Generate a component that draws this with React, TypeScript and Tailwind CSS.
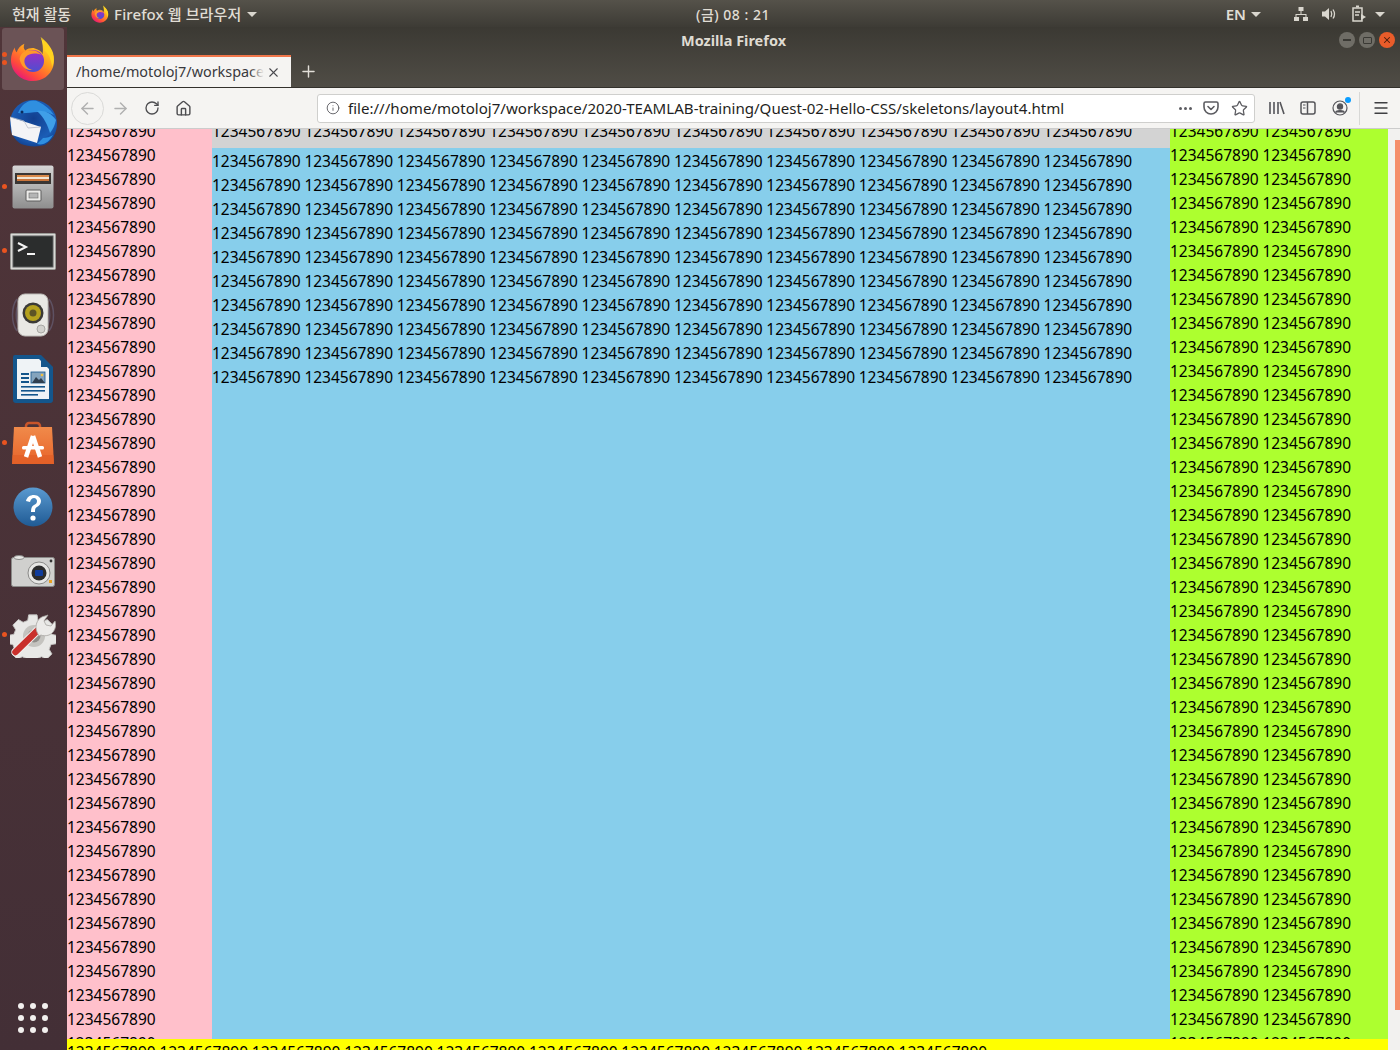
import { ArrowLeft, ArrowRight, Home, Info, Menu, Plus, RotateCw, Star, X } from 'lucide-react';
import type { ReactNode } from 'react';

const repeatNumber = (count: number) => Array(count).fill('1234567890').join(' ');

const FirefoxLogo = ({ size = 48, id = 'fx' }: { size?: number; id?: string }) => (
  <svg width={size} height={size} viewBox="0 0 48 48">
    <defs>
      <linearGradient id={`${id}-body`} x1="0.8" y1="0.1" x2="0.2" y2="0.95">
        <stop offset="0" stopColor="#ffe226" />
        <stop offset="0.4" stopColor="#ff9a1f" />
        <stop offset="0.75" stopColor="#ff4c3a" />
        <stop offset="1" stopColor="#e6167c" />
      </linearGradient>
      <linearGradient id={`${id}-globe`} x1="0.5" y1="0" x2="0.5" y2="1">
        <stop offset="0" stopColor="#a32bc4" />
        <stop offset="1" stopColor="#4d4fd0" />
      </linearGradient>
    </defs>
    <path d="M32 1c2 4 6 7 9 11 5 6 6 14 4 20-3 9-11 15-21 15C11 47 1 37 1 25c0-5 2-10 4-13 0 2 1 4 2 5 1-4 4-7 8-9-1 3-1 5 1 7 3-2 7-3 10-2 4 1 7 3 8 6 1-6 0-12-2-18z" fill={`url(#${id}-body)`} />
    <path d="M32 1c5 4 11 10 13 17 1 5 1 10-1 14-1-7-3-13-8-17 1-5-1-10-4-14z" fill="#ffd21f" />
    <circle cx="24" cy="26" r="11.5" fill={`url(#${id}-globe)`} />
    <path d="M10 24c1-6 5-9 10-9 5-1 10 1 13 5-4-2-9-2-12-1-4 1-6 4-6 7 0 5 4 9 9 9-6 2-12-2-14-11z" fill="#ff9a2a" />
  </svg>
);

const Thunderbird = () => (
  <svg width="48" height="50" viewBox="0 0 48 50">
    <defs>
      <radialGradient id="tb-body" cx="0.5" cy="0.4" r="0.65">
        <stop offset="0" stopColor="#123f8e" />
        <stop offset="0.7" stopColor="#1b5db6" />
        <stop offset="1" stopColor="#0f3d8a" />
      </radialGradient>
    </defs>
    <path d="M1 26C1 12 11 2 24 2s24 10 24 24c0 9-5 17-12 21-8 2-16 2-24-1C5 42 1 34 1 26z" fill="url(#tb-body)" />
    <path d="M9 15C13 5 22 0 30 4c6 3 11 7 15 13-6-3-11-4-16-3-7 0-13 2-20 1z" fill="#2f8fe0" />
    <path d="M28 13c7-1 14 2 19 9-1 5-3 9-6 13-2-7-6-16-13-22z" fill="#3f9fe8" />
    <circle cx="13" cy="14" r="1.5" fill="#0c2a5c" />
    <path d="M1 19l31 10-4 16-25-8z" fill="#f4f4f6" />
    <path d="M1 19l14 4 4 7 13-1" fill="none" stroke="#b8bcc8" strokeWidth="0.8" />
    <path d="M28 46c7 2 13-3 16-9-3 2-6 3-10 3z" fill="#2f8fe0" />
  </svg>
);

const FileCabinet = () => (
  <svg width="42" height="44" viewBox="0 0 42 44">
    <defs>
      <linearGradient id="fc-body" x1="0" y1="0" x2="0" y2="1">
        <stop offset="0" stopColor="#d6d6d6" />
        <stop offset="1" stopColor="#8e8e8e" />
      </linearGradient>
    </defs>
    <rect x="0.5" y="0.5" width="41" height="43" rx="2" fill="url(#fc-body)" />
    <rect x="3" y="8" width="36" height="11" fill="#3a3634" />
    <rect x="5" y="10" width="32" height="2" fill="#d98a4a" />
    <rect x="5" y="12" width="32" height="2" fill="#f0e4d2" />
    <rect x="5" y="14" width="32" height="2" fill="#c9743a" />
    <rect x="14" y="25" width="15" height="11" rx="1" fill="#ecebe9" stroke="#5c5c5c" />
    <rect x="17" y="28" width="9" height="5" fill="#b5b5b5" stroke="#6b6b6b" strokeWidth="0.6" />
  </svg>
);

const Terminal = () => (
  <svg width="46" height="37" viewBox="0 0 46 37">
    <rect x="0.5" y="0.5" width="45" height="36" rx="1" fill="#d9d9d6" stroke="#9a9a96" />
    <rect x="3" y="3" width="40" height="31" fill="#2b2d2d" stroke="#5a5c5c" />
    <path d="M8 10l8 4-8 4" stroke="#f4f4f4" strokeWidth="2" fill="none" />
    <rect x="17" y="20" width="8" height="2" fill="#f4f4f4" />
  </svg>
);

const Speaker = () => (
  <svg width="50" height="44" viewBox="0 0 50 44">
    <g fill="none" stroke="#6e6a85" strokeOpacity="0.55" strokeWidth="1.5">
      <path d="M9 6C3 14 3 30 9 38" />
      <path d="M41 6c6 8 6 24 0 32" />
      <path d="M12 9C7 16 7 28 12 35" />
      <path d="M38 9c5 7 5 19 0 26" />
    </g>
    <rect x="10" y="1" width="30" height="42" rx="7" fill="#e9e8e4" stroke="#bdbcb8" />
    <circle cx="25" cy="20" r="10.5" fill="#3b3a37" />
    <circle cx="25" cy="20" r="8" fill="#b5a11e" />
    <circle cx="25" cy="20" r="3.5" fill="#5d5426" />
    <circle cx="33" cy="36" r="4" fill="#d2d1cd" stroke="#a9a8a4" />
  </svg>
);

const WriterDoc = () => (
  <svg width="40" height="48" viewBox="0 0 40 48">
    <path d="M2 0h26l12 12v33a3 3 0 0 1-3 3H3a3 3 0 0 1-3-3V2a2 2 0 0 1 2-2z" fill="#14568c" />
    <path d="M4 4h22l10 10v30H4z" fill="#eff3f6" />
    <path d="M28 1l11 11H28z" fill="#14568c" />
    <g fill="#14568c">
      <rect x="8" y="18" width="8" height="2" />
      <rect x="8" y="22" width="8" height="2" />
      <rect x="8" y="26" width="8" height="2" />
      <rect x="8" y="31" width="24" height="1.6" />
      <rect x="8" y="35" width="24" height="1.6" />
      <rect x="8" y="39" width="17" height="1.6" />
    </g>
    <rect x="18" y="17" width="14" height="11" fill="#84a4bd" stroke="#14568c" strokeWidth="0.8" />
    <path d="M19 28l4-6 3 3 2-2 4 5z" fill="#2f3f4f" />
    <circle cx="29" cy="20" r="1.3" fill="#f0c040" />
  </svg>
);

const ShopBag = () => (
  <svg width="42" height="44" viewBox="0 0 42 44">
    <defs>
      <linearGradient id="bag" x1="0" y1="0" x2="0" y2="1">
        <stop offset="0" stopColor="#f08a4a" />
        <stop offset="1" stopColor="#e8642a" />
      </linearGradient>
    </defs>
    <path d="M14 10V5a3 3 0 0 1 3-3h8a3 3 0 0 1 3 3v5" fill="none" stroke="#c9552a" strokeWidth="2.5" />
    <path d="M2 6h38l2 37H0z" fill="url(#bag)" />
    <path d="M0.5 34h41l0.5 9H0z" fill="#e05e26" opacity="0.6" />
    <path d="M21 15l-7 21M21 15l7 21" stroke="#fff" strokeWidth="4.5" fill="none" />
    <rect x="10" y="25" width="22" height="3.5" rx="1.5" fill="#fff" />
  </svg>
);

const HelpIcon = () => (
  <svg width="40" height="40" viewBox="0 0 40 40">
    <defs>
      <linearGradient id="help" x1="0" y1="0" x2="0" y2="1">
        <stop offset="0" stopColor="#5a9ad0" />
        <stop offset="1" stopColor="#1f5a94" />
      </linearGradient>
    </defs>
    <circle cx="20" cy="20" r="19.5" fill="url(#help)" />
    <path d="M13 14c1-4 4-6 8-6 4 0 7 3 7 6 0 3-2 5-4 6-2 1-2 3-2 5h-4c0-4 1-6 3-7s3-2 3-4c0-1-1-3-3-3-2 0-3 1-4 4z" fill="#fff" />
    <circle cx="20" cy="31" r="2.6" fill="#fff" />
  </svg>
);

const Camera = () => (
  <svg width="44" height="32" viewBox="0 0 44 32">
    <rect x="0.5" y="2.5" width="43" height="29" rx="2" fill="#d0d0ce" stroke="#8a8a88" />
    <ellipse cx="8" cy="2.5" rx="5" ry="2" fill="#e8e8e6" stroke="#8a8a88" />
    <circle cx="28" cy="18" r="11" fill="#e6e6e4" stroke="#8a8a88" />
    <circle cx="28" cy="18" r="7.5" fill="#2c2c2c" />
    <rect x="24" y="15" width="8" height="6" rx="1" fill="#0f3c9c" />
    <rect x="38" y="25" width="3" height="3" fill="#eaa020" />
    <circle cx="40" cy="6" r="1.4" fill="#333" />
  </svg>
);

const SettingsTool = () => (
  <svg width="46" height="46" viewBox="0 0 46 46">
    <path d="M19 2h9l1 6 5 2 5-3 6 6-3 5 2 5 5 1v9l-6 1-2 5 3 5-6 6-5-3-5 2-1 6h-9l-1-6-5-2-5 3-6-6 3-5-2-5-5-1v-9l6-1 2-5-3-5 6-6 5 3 5-2z" transform="translate(1 1) scale(0.93)" fill="#e8e8e6" stroke="#c4c4c2" />
    <circle cx="24" cy="24" r="11" fill="#c4c3bf" />
    <circle cx="24" cy="24" r="6.5" fill="#8f8d89" />
    <path d="M5.5 40L29 17" stroke="#f0efed" strokeWidth="8.5" strokeLinecap="round" />
    <path d="M5.500 40L29 17" stroke="#c9302c" strokeWidth="6.5" strokeLinecap="round" />
    <path d="M27 20c-3-7 1-15 8-16l3-1-4 6 2 4 5 1 4-5c2 6-1 12-6 14-3 1-6 1-8 0l-2 1z" fill="#ecebe9" stroke="#a8a6a2" strokeWidth="0.8" />
  </svg>
);

const Pocket = () => (
  <svg width="16" height="16" viewBox="0 0 16 16" fill="none" stroke="#5c5c61" strokeWidth="1.6">
    <path d="M2.5 2h11A1.5 1.5 0 0 1 15 3.5V7a7 7 0 0 1-14 0V3.5A1.5 1.5 0 0 1 2.5 2z" />
    <path d="M5 6.5l3 3 3-3" strokeLinecap="round" strokeLinejoin="round" />
  </svg>
);

const Library = () => (
  <svg width="17" height="16" viewBox="0 0 17 16" stroke="#55555a" strokeWidth="1.6" fill="none">
    <path d="M2 2v12M6 2v12M10 2v12M12 2l4 12" />
  </svg>
);

const Sidebar = () => (
  <svg width="16" height="16" viewBox="0 0 16 16" fill="none" stroke="#55555a" strokeWidth="1.5">
    <rect x="1" y="2" width="14" height="12" rx="2" />
    <path d="M7.5 2v12" />
    <path d="M3 5h2.5M3 8h2.5" strokeWidth="1.2" />
  </svg>
);

const Account = () => (
  <span className="relative block">
    <svg width="16" height="16" viewBox="0 0 16 16" fill="none" stroke="#55555a" strokeWidth="1.2">
      <circle cx="8" cy="8" r="7" />
      <circle cx="8" cy="6.5" r="2.6" fill="#55555a" />
      <path d="M3.5 12.5c1-2.5 8-2.5 9 0" fill="#55555a" />
    </svg>
    <span className="absolute -top-[3px] -right-[3px] h-[6px] w-[6px] rounded-full bg-[#0a9dff]" />
  </span>
);

const Caret = () => <span className="block h-0 w-0 border-x-[5px] border-t-[5px] border-x-transparent border-t-[#d9d6ce]" />;

const Dots = ({ rows }: { rows: number[] }) => (
  <>
    {rows.map((top) => (
      <span key={top} className="absolute left-[2px] h-[5px] w-[5px] rounded-full bg-[#e95420]" style={{ top }} />
    ))}
  </>
);

const DockItem = ({ children, dots = [], active }: { children: ReactNode; dots?: number[]; active?: boolean }) => (
  <div className="relative flex h-[64px] w-[67px] items-center justify-center">
    {active && <div className="absolute left-[2px] top-[1px] h-[62px] w-[62px] rounded-[3px] bg-[#6b5356]" />}
    <Dots rows={dots} />
    <div className="relative -translate-x-px">{children}</div>
  </div>
);

const Dock = () => (
  <aside className="flex w-[67px] flex-col bg-gradient-to-b from-[#503539] to-[#432f36]">
    <DockItem active dots={[25, 33]}><FirefoxLogo size={46} id="dock-fx" /></DockItem>
    <DockItem><Thunderbird /></DockItem>
    <DockItem dots={[29]}><FileCabinet /></DockItem>
    <DockItem dots={[29]}><Terminal /></DockItem>
    <DockItem><Speaker /></DockItem>
    <DockItem><WriterDoc /></DockItem>
    <DockItem dots={[29]}><ShopBag /></DockItem>
    <DockItem><HelpIcon /></DockItem>
    <DockItem><Camera /></DockItem>
    <DockItem dots={[29]}><SettingsTool /></DockItem>
    <div className="mt-auto mb-[17px] -ml-px grid w-[30px] grid-cols-3 gap-[6px] self-center">
      {Array.from({ length: 9 }).map((_, i) => (
        <span key={i} className="h-[6px] w-[6px] rounded-full bg-[#f2f0ee]" />
      ))}
    </div>
  </aside>
);

const TopBar = () => (
  <header className="flex h-[27px] items-center bg-gradient-to-b from-[#55524a] to-[#3d3b35] pt-[1px] text-[15px] font-medium text-[#e0ddd5] [font-family:'Noto_Sans','Noto_Sans_CJK_KR',sans-serif]">
    <div className="flex w-[583px] items-center">
      <span className="ml-[12px]">현재 활동</span>
      <span className="ml-[20px] block"><FirefoxLogo size={18} id="top-fx" /></span>
      <span className="ml-[5px] tracking-[0.1px]">Firefox 웹 브라우저</span>
      <span className="ml-[6px] block"><Caret /></span>
    </div>
    <span className="w-[300px] text-center text-[14px] tracking-[0.5px]">(금) 08 : 21</span>
    <div className="flex flex-1 items-center">
      <span className="ml-auto flex items-center gap-[5px] font-semibold">EN <Caret /></span>
      <svg className="ml-[32px]" width="16" height="16" viewBox="0 0 16 16" fill="#d9d6ce">
        <rect x="5.5" y="1" width="5" height="4" />
        <rect x="1" y="11" width="5" height="4" />
        <rect x="10" y="11" width="5" height="4" />
        <path d="M7.5 5h1v3h5v3h-1V9h-9v2h-1V8h5z" />
      </svg>
      <svg className="ml-[12px]" width="16" height="16" viewBox="0 0 16 16" fill="#d9d6ce">
        <path d="M1 5.5h3L8 2v12l-4-3.5H1z" />
        <path d="M10 5c1 2 1 4 0 6M12 3.5c2 3 2 6 0 9" stroke="#d9d6ce" strokeWidth="1.3" fill="none" />
      </svg>
      <svg className="ml-[14px]" width="16" height="18" viewBox="0 0 16 18" fill="none" stroke="#d9d6ce" strokeWidth="1.5">
        <path d="M2 3h9v13H2z" />
        <path d="M5 1.5h3" strokeWidth="2" />
        <path d="M4 7h5M4 10h4" />
        <path d="M10 9l5 3-5 3z" fill="#d9d6ce" stroke="none" />
      </svg>
      <span className="mr-[15px] ml-[8px] block"><Caret /></span>
    </div>
  </header>
);

const TitleBar = () => (
  <div className="relative flex h-[28px] items-center justify-center text-[14.5px] font-bold text-[#dfdbd2] [font-family:'Noto_Sans',sans-serif]">
    Mozilla Firefox
    <div className="absolute top-[5px] right-[5px] flex gap-[4px]">
      <span className="flex h-[16px] w-[16px] items-center justify-center rounded-full bg-[#6f6d66]">
        <span className="h-[1.5px] w-[8px] bg-[#3a3934]" />
      </span>
      <span className="flex h-[16px] w-[16px] items-center justify-center rounded-full bg-[#6f6d66]">
        <span className="h-[7px] w-[9px] rounded-[1px] border border-[#3a3934]" />
      </span>
      <span className="flex h-[16px] w-[16px] items-center justify-center rounded-full bg-[#e95c2a]">
        <X size={10} strokeWidth={2.5} color="#4a1d0c" />
      </span>
    </div>
  </div>
);

const TabStrip = () => (
  <div className="flex h-[33px] items-stretch border-b border-[#33312c]">
    <div className="relative flex w-[224px] items-center border-t-2 border-[#f0764a] bg-[#f5f4f2] pl-[9px] text-[14.4px] text-[#39393d] [font-family:'Noto_Sans',sans-serif]">
      <span className="w-[188px] overflow-hidden whitespace-nowrap">/home/motoloj7/workspace/2020-TEAMLAB</span>
      <span className="absolute right-[27px] h-full w-[14px] bg-gradient-to-r from-transparent to-[#f5f4f2]" />
      <X className="absolute right-[10px]" size={15} strokeWidth={1.7} color="#4a4a4f" />
    </div>
    <div className="flex w-[34px] items-center justify-center">
      <Plus size={19} strokeWidth={1.8} color="#e2dfd8" />
    </div>
  </div>
);

const Toolbar = () => (
  <div className="flex h-[41px] items-center border-b border-[#cccccc] bg-[#f5f4f2]">
    <div className="ml-[4px] flex h-[33px] w-[33px] items-center justify-center rounded-full border border-[#dadad8]">
      <ArrowLeft size={19} strokeWidth={1.8} color="#b0b0b0" />
    </div>
    <ArrowRight className="ml-[7px]" size={19} strokeWidth={1.8} color="#b0b0b0" />
    <RotateCw className="ml-[14px]" size={16} strokeWidth={2} color="#4d4d50" />
    <Home className="ml-[15px]" size={17} strokeWidth={2} color="#4d4d50" />
    <div className="ml-[125px] flex h-[29px] w-[938px] items-center rounded-[3px] border border-[#cfcfcd] bg-white pr-[6px] pl-[8px] text-[15.08px] text-[#1f1f22] [font-family:'Noto_Sans',sans-serif]">
      <Info size={14} strokeWidth={1.5} color="#55555a" />
      <span className="ml-[8px] whitespace-nowrap">file:///home/motoloj7/workspace/2020-TEAMLAB-training/Quest-02-Hello-CSS/skeletons/layout4.html</span>
      <span className="ml-auto flex items-center gap-[2px]">
        <span className="h-[3px] w-[3px] rounded-full bg-[#5c5c61]" />
        <span className="h-[3px] w-[3px] rounded-full bg-[#5c5c61]" />
        <span className="h-[3px] w-[3px] rounded-full bg-[#5c5c61]" />
      </span>
      <span className="ml-[11px] block"><Pocket /></span>
      <Star className="ml-[12px]" size={17} strokeWidth={1.8} color="#5c5c61" />
    </div>
    <span className="ml-[13px] block"><Library /></span>
    <span className="ml-[15px] block"><Sidebar /></span>
    <span className="ml-[16px] block"><Account /></span>
    <span className="ml-[11px] h-[33px] w-px bg-[#d8d8d6]" />
    <Menu className="ml-[12px]" size={18} strokeWidth={1.8} color="#3f3f42" />
  </div>
);

const Page = () => (
  <div className="flex min-h-0 flex-1 overflow-hidden bg-[#f2f1ef]">
    <div className="flex min-w-0 flex-1 flex-col overflow-hidden text-[15.5px] leading-[24px] text-black [font-family:'Noto_Sans',sans-serif] [word-spacing:-0.3px]">
      <div className="-mt-[10px] flex min-h-0 flex-1 overflow-hidden">
        <div className="w-[145px] bg-[#ffc0cb]">{repeatNumber(40)}</div>
        <div className="flex w-[958px] flex-col">
          <div className="h-[29px] bg-[#d3d3d3]">{repeatNumber(10)}</div>
          <div className="flex-1 bg-[#87ceeb] pt-[1px]">{repeatNumber(100)}</div>
        </div>
        <div className="flex-1 bg-[#adff2f]">{repeatNumber(80)}</div>
      </div>
      <div className="h-[11px] shrink-0 overflow-hidden bg-[#ffff00] pt-[1px] whitespace-nowrap">{repeatNumber(10)}</div>
    </div>
    <div className="w-[12px] shrink-0 pt-[11px] pb-[40px] pl-[7px]">
      <div className="h-full w-[5px] bg-[#f58e69]" />
    </div>
  </div>
);

export default function App() {
  return (
    <div className="flex h-[1050px] w-[1400px] flex-col overflow-hidden bg-[#f2f1ef]">
      <TopBar />
      <div className="flex min-h-0 flex-1">
        <Dock />
        <main className="flex min-w-0 flex-1 flex-col">
          <div className="bg-gradient-to-b from-[#3b3933] to-[#504d46]">
            <TitleBar />
            <TabStrip />
          </div>
          <Toolbar />
          <Page />
        </main>
      </div>
    </div>
  );
}
